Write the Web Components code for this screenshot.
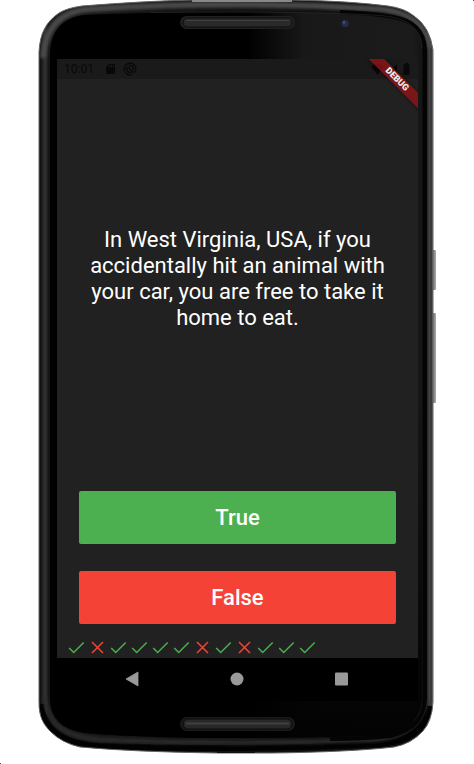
<!DOCTYPE html>
<html lang="en">
<head>
<meta charset="utf-8">
<meta name="viewport" content="width=device-width, initial-scale=1">
<title>Quizzler</title>
<style>
body { margin: 0; background: #fff; font-family: Roboto, "Liberation Sans", sans-serif; }
</style>
</head>
<body>
<phone-frame>
  <status-bar slot="status" time="10:01"></status-bar>
  <quiz-page>
    <span slot="question">In West Virginia, USA, if you accidentally hit an animal with your car, you are free to take it home to eat.</span>
    <answer-button slot="answers" tone="yes">True</answer-button>
    <answer-button slot="answers" tone="no">False</answer-button>
    <score-keeper slot="score" marks="101111010111"></score-keeper>
  </quiz-page>
  <debug-banner slot="banner">DEBUG</debug-banner>
  <nav-bar slot="nav"></nav-bar>
</phone-frame>

<script>
function define(name, html, setup) {
  const template = document.createElement('template');
  template.innerHTML = html;
  customElements.define(name, class extends HTMLElement {
    constructor() {
      super();
      this.attachShadow({ mode: 'open' }).append(template.content.cloneNode(true));
    }
    connectedCallback() { if (setup) setup(this, this.shadowRoot); }
  });
}

define('phone-frame', `
<style>
:host { display: flex; flex-direction: column; position: relative; box-sizing: border-box; min-height: 100vh; padding: 59px 56px 63px 57px; }
.case { position: absolute; inset: 0; width: 100%; height: 100%; }
.screen { position: relative; flex: 1; display: flex; flex-direction: column; overflow: hidden; background: #212121; }
::slotted(quiz-page) { flex: 1; }
</style>
<svg class="case" viewBox="0 0 474 764" preserveAspectRatio="none" aria-hidden="true">
  <defs>
    <linearGradient id="rim" gradientUnits="userSpaceOnUse" x1="38" y1="0" x2="434" y2="0">
      <stop offset="0" stop-color="#777"/><stop offset=".003" stop-color="#080808"/>
      <stop offset=".012" stop-color="#222"/><stop offset=".018" stop-color="#343434"/>
      <stop offset=".027" stop-color="#141414"/><stop offset=".03" stop-color="#181818"/>
      <stop offset=".97" stop-color="#0c0c0c"/><stop offset=".98" stop-color="#111"/>
      <stop offset=".988" stop-color="#444"/><stop offset=".993" stop-color="#333"/>
      <stop offset="1" stop-color="#777"/>
    </linearGradient>
    <linearGradient id="glass" gradientUnits="userSpaceOnUse" x1="50" y1="0" x2="423" y2="0">
      <stop offset="0" stop-color="#000"/><stop offset=".53" stop-color="#000"/>
      <stop offset=".68" stop-color="#181818"/><stop offset=".97" stop-color="#1b1b1b"/><stop offset="1" stop-color="#141414"/>
    </linearGradient>
    <linearGradient id="fade" x1="0" y1="0" x2="0" y2="1">
      <stop offset="0" stop-color="#000" stop-opacity="0"/><stop offset=".8" stop-color="#000" stop-opacity=".75"/><stop offset="1" stop-color="#000" stop-opacity=".9"/>
    </linearGradient>
    <linearGradient id="key" x1="0" y1="0" x2="1" y2="0">
      <stop offset="0" stop-color="#666"/><stop offset="1" stop-color="#aaa"/>
    </linearGradient>
    <filter id="soft" x="-10%" y="-10%" width="120%" height="120%"><feGaussianBlur stdDeviation="1.4"/></filter>
    <clipPath id="outline"><path d="M39 52C40 33 46 22 59 13Q67 8 82 6Q145 1 192 0H292Q350 1 388 6Q404 8 414 16Q430 27 433 50V702Q432 721 423 731Q411 744 394 747Q350 752 272 753H217Q135 752 80 747Q62 743 51 732C43 724 39 717 39 702Z"/></clipPath>
  </defs>
  <rect x="432" y="250" width="4" height="40" rx="1" fill="url(#key)"/>
  <rect x="432" y="313" width="4" height="90" rx="1" fill="url(#key)"/>
  <g clip-path="url(#outline)">
    <rect x="38" width="397" height="754" fill="url(#rim)"/>
    <path d="M43 58C45 28 60 11 90 9Q235 0 380 9Q424 13 430 48" fill="none" stroke="#484848" stroke-width="6" filter="url(#soft)"/>
    <path d="M41 704C44 731 65 744 100 746Q235 751 380 744Q424 740 430 706" fill="none" stroke="#020202" stroke-width="6"/>
    <path d="M45 696C47 727 68 738 105 740Q235 745 375 740Q418 736 427 700" fill="none" stroke="#2b2b2b" stroke-width="4" filter="url(#soft)"/>
  </g>
  <path d="M50 55C50 31 63 17 85 15Q150 12 236 12Q330 12 385 16Q421 20 422 48V698Q420 728 390 735Q330 738 236 738Q145 738 85 733Q50 728 50 698Z" fill="url(#glass)"/>
  <path d="M50 698V400H422V698Q420 728 390 735Q330 738 236 738Q145 738 85 733Q50 728 50 698Z" fill="url(#fade)"/>
  <path d="M340 12Q372 13 393 17Q424 22 425 50V698Q424 728 391 736Q365 739 330 739" fill="none" stroke="#040404" stroke-width="4"/>
  <path d="M150 12.500Q330 11 385 16Q421 20 422 48" fill="none" stroke="#333" stroke-width=".5"/>
  <path d="M39 52C40 33 46 22 59 13Q67 8 82 6Q145 1 192 0H292Q350 1 388 6Q404 8 414 16Q430 27 433 50V702Q432 721 423 731Q411 744 394 747Q350 752 272 753H217Q135 752 80 747Q62 743 51 732C43 724 39 717 39 702Z" fill="none" stroke="#666" stroke-width="1"/>
  <path d="M192 1H292" stroke="#888" stroke-width="2"/>
  <path d="M217 752H255" stroke="#111" stroke-width="2"/>
  <rect x="180" y="16" width="115" height="13" rx="6.500" fill="#202020"/>
  <rect x="183" y="18" width="109" height="9" rx="4.500" fill="#2a2a2a" stroke="#0d0d0d"/>
  <path d="M186 20.500H289" stroke="#404040"/>
  <rect x="180" y="717" width="115" height="14" rx="7" fill="#1a1a1a"/>
  <rect x="183" y="719" width="109" height="10" rx="5" fill="#282828" stroke="#0a0a0a"/>
  <path d="M186 723.500H289" stroke="#404040" stroke-width="2"/>
  <circle cx="345" cy="23.500" r="5" fill="#191b24"/><circle cx="345" cy="23.500" r="3.500" fill="#262c46"/><circle cx="344" cy="22.500" r="1.200" fill="#4a5580"/>
  <path d="M0 763h1v1H0zM473 0h1v1h-1z" fill="#555"/>
</svg>
<div class="screen">
  <slot name="status"></slot>
  <slot></slot>
  <slot name="nav"></slot>
  <slot name="banner"></slot>
</div>`);

define('status-bar', `
<style>
:host { display: flex; align-items: center; box-sizing: border-box; height: 20px; padding: 0 7px; background: #1a1a1a; color: #080808; font-size: 12px; line-height: 20px; }
.sd { width: 11px; height: 12px; margin-left: 11px; }
.sync { width: 14px; height: 14px; margin-left: 7px; }
.system { width: 40px; height: 14px; margin-left: auto; }
</style>
<time></time>
<svg class="sd" viewBox="0 0 11 12" fill="currentColor"><path fill-rule="evenodd" d="M4 1h5q1 0 1 1v8q0 1-1 1H2q-1 0-1-1V4zM4 2v2h1V2zm2 0v2h1V2zm2 0v2h1V2z"/></svg>
<svg class="sync" viewBox="0 0 14 14" fill="none" stroke="currentColor"><path d="M9 12.500A5.800 5.800 0 1 1 12 10M4.500 5A3.300 3.300 0 0 0 8.500 10M6 3.800A3.300 3.300 0 0 1 10.200 8M5 5l6 6" stroke-width="1.300"/></svg>
<svg class="system" viewBox="0 0 40 14" fill="currentColor"><path d="M0 4.500Q6.500 -1 13 4.500L6.500 13zM26 2v10H16zM32.500 2.500h1.500V1h3v1.500h1.500V13h-6z"/></svg>`,
(host, root) => { root.querySelector('time').textContent = host.getAttribute('time'); });

define('quiz-page', `
<style>
:host { display: flex; flex-direction: column; background: #212121; color: #fff; }
.question { flex: 1; display: flex; align-items: center; justify-content: center; margin: 0; padding: 0 24px; text-align: center; font-size: 22px; font-weight: 400; line-height: 26px; }
.answers { display: flex; flex-direction: column; gap: 27px; padding: 12px 22px 13px; }
</style>
<p class="question"><slot name="question"></slot></p>
<div class="answers"><slot name="answers"></slot></div>
<slot name="score"></slot>`);

define('answer-button', `
<style>
:host { display: block; }
button { display: block; width: 100%; height: 53px; margin: 0; padding: 0; border: 0; border-radius: 2px; background: #4caf50; color: #fff; font: 500 22px/26px Roboto, "Liberation Sans", sans-serif; cursor: pointer; }
:host([tone="no"]) button { background: #f44336; }
</style>
<button type="button"><slot></slot></button>`);

define('score-keeper', `
<style>
:host { display: flex; height: 21px; padding: 0 9px; }
svg { width: 21px; height: 21px; fill: none; stroke-width: 1.5; }
.right { stroke: #4caf50; }
.wrong { stroke: #f44336; }
</style>`,
(host, root) => {
  for (const mark of host.getAttribute('marks')) {
    const right = mark === '1';
    root.append(document.createRange().createContextualFragment(
      `<svg viewBox="0 0 21 21" role="img" class="${right ? 'right' : 'wrong'}" aria-label="${right ? 'correct' : 'wrong'}">` +
      `<path d="${right ? 'M3.200 11L7.700 15.500L17.700 5.500' : 'M5 5L16 16M16 5L5 16'}"/></svg>`));
  }
});

define('nav-bar', `
<style>
:host { display: flex; justify-content: space-between; align-items: flex-start; box-sizing: border-box; height: 43px; padding: 10px 66px 0 64px; background: #000; }
button { display: flex; margin: 0; padding: 0; border: 0; background: none; cursor: pointer; }
svg { width: 22px; height: 22px; fill: #999; }
</style>
<button type="button" aria-label="Back"><svg viewBox="0 0 22 22"><path d="M17 4v14L5 11z" stroke="#999" stroke-linejoin="round" stroke-width=".8"/></svg></button>
<button type="button" aria-label="Home"><svg viewBox="0 0 22 22"><circle cx="11" cy="11" r="6.500"/></svg></button>
<button type="button" aria-label="Overview"><svg viewBox="0 0 22 22"><rect x="5" y="4.500" width="13" height="13" rx="1"/></svg></button>`);

define('debug-banner', `
<style>
:host { position: absolute; top: 15px; right: -19px; width: 80px; height: 11px; background: rgba(140, 20, 22, .84); box-shadow: 0 0 4px rgba(0, 0, 0, .5); color: #eee; text-align: center; font-size: 9px; font-weight: 900; line-height: 11px; transform: rotate(45deg); }
</style>
<slot></slot>`);
</script>
</body>
</html>
